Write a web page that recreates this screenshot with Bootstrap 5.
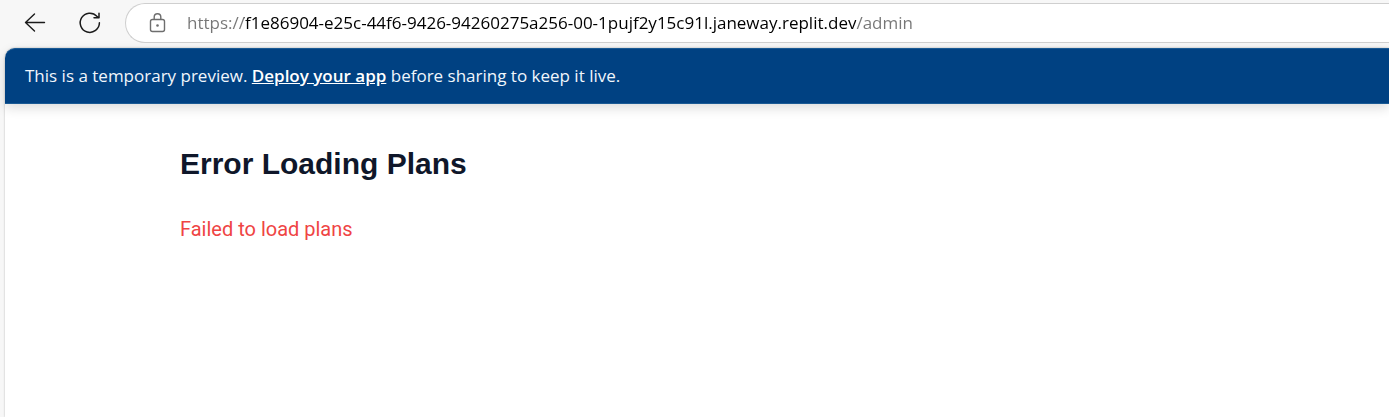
<!DOCTYPE html>
<html lang="en">
<head>
<meta charset="utf-8">
<meta name="viewport" content="width=device-width, initial-scale=1">
<title>Admin</title>
<link href="https://cdn.jsdelivr.net/npm/bootstrap@5.3.0/dist/css/bootstrap.min.css" rel="stylesheet">
<style>
  body { background: #f7f7f7; }
  .toolbar { padding: 3px 0 5px 20px; }
  .tool-btn { width: 30px; height: 30px; color: #1b1b1b; }
  .address { height: 40px; margin-left: 21px; padding-left: 21px; gap: 18px; border: 1px solid #cfcfcf; color: #6e6e6e; }
  /* scheme and path are grey, the host is black */
  .address-input {
    font: 17px/24px "Open Sans", sans-serif;
    color: transparent;
    background: linear-gradient(90deg, #767676 57px, #000 57px, #000 669px, #767676 669px);
    -webkit-background-clip: text;
    background-clip: text;
    outline: 0;
  }
  .viewport-frame { margin-left: 5px; border-top-left-radius: 10px; box-shadow: 0 0 2px rgba(0,0,0,.3); }
  .preview-bar {
    height: 56px; padding: 0 20px; background: #004182; color: #f0f6fc;
    border-top: 1px solid #1a5a94; border-bottom: 1px solid #1a5a94;
    border-top-left-radius: 10px;
    font: 17px/24px "Open Sans", sans-serif;
    box-shadow: 0 4px 12px rgba(0,0,0,.14);
  }
  .preview-bar a { color: #fff; font-weight: 600; }
  .page-body { padding: 40px 175px; }
  .page-title { font: 700 30px/40px "Liberation Sans", Arial, sans-serif; color: #0f172a; margin-bottom: 30px; }
  .page-error { font: 20px/30px Roboto, sans-serif; color: #ef4444; }
</style>
</head>
<body class="d-flex flex-column min-vh-100 overflow-x-hidden">
<header class="toolbar d-flex align-items-center">
  <button type="button" class="tool-btn btn p-0 border-0 d-flex align-items-center justify-content-center" aria-label="Back">
    <svg width="30" height="30" viewBox="0 0 30 30" fill="none" stroke="currentColor" stroke-width="1.4" stroke-linecap="round" stroke-linejoin="round"><path d="M24.5 14.500H5.500M14.500 6L5.500 14.500L14.500 23"/></svg>
  </button>
  <button type="button" class="tool-btn btn p-0 border-0 ms-4 d-flex align-items-center justify-content-center" aria-label="Reload">
    <svg width="30" height="30" viewBox="0 0 30 30" fill="none" stroke="currentColor" stroke-width="1.500" stroke-linecap="round" stroke-linejoin="round"><path d="M25.400 14.800A9.600 9.600 0 1 1 22.900 8.300L24.700 9.800M25 5.300V9.800H20"/></svg>
  </button>
  <form class="address flex-grow-1 d-flex align-items-center bg-white rounded-start-pill border-end-0">
    <svg width="22" height="22" viewBox="0 0 22 22" fill="none" stroke="currentColor" stroke-width="1.400" aria-hidden="true"><rect x="3.500" y="7.500" width="14" height="12" rx="2"/><path d="M7.200 7.500V5a3.300 3.300 0 0 1 6.600 0V7.500"/><circle cx="10.500" cy="13.500" r="1.300" fill="currentColor" stroke="none"/></svg>
    <input class="address-input flex-grow-1 border-0 p-0" type="text" aria-label="Address" spellcheck="false" value="https://f1e86904-e25c-44f6-9426-94260275a256-00-1pujf2y15c91l.janeway.replit.dev/admin">
  </form>
</header>
<main class="viewport-frame flex-grow-1 bg-white">
  <div class="preview-bar d-flex align-items-center">
    <p class="mb-0">This is a temporary preview. <a href="#">Deploy your app</a> before sharing to keep it live.</p>
  </div>
  <section class="page-body">
    <h1 class="page-title">Error Loading Plans</h1>
    <p class="page-error mb-0">Failed to load plans</p>
  </section>
</main>
<script src="https://cdn.jsdelivr.net/npm/bootstrap@5.3.0/dist/js/bootstrap.bundle.min.js"></script>
</body>
</html>
